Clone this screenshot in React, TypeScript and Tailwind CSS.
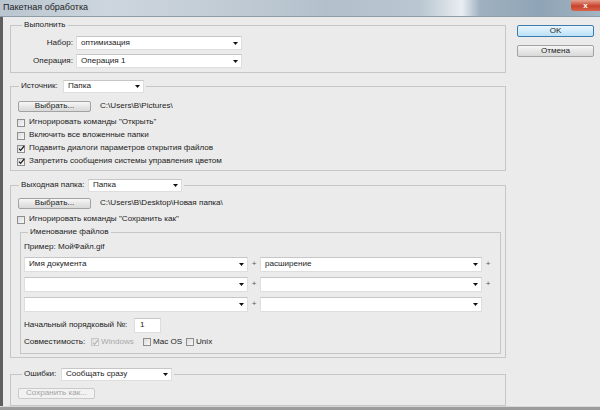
import React from "react";

function Arrow() {
  return (
    <svg width="5" height="3" viewBox="0 0 5 3" className="shrink-0">
      <path d="M0 0h5L2.5 3z" fill="#111" />
    </svg>
  );
}

function Select({ text, className }: { text?: string; className: string }) {
  return (
    <div
      className={`flex items-center bg-white border border-[#dedede] border-t-[#c6c6c6] pl-[4px] pr-[3px] ${className}`}
    >
      <span className="flex-1 truncate leading-none">{text}</span>
      <Arrow />
    </div>
  );
}

function Check({ checked, disabled }: { checked?: boolean; disabled?: boolean }) {
  return (
    <span
      className={`w-[8px] h-[8px] border ${
        disabled ? "border-[#c9c9c9]" : "border-[#8e8e8e]"
      } bg-[linear-gradient(135deg,#dcdcdc,#f8f8f8)] flex items-center justify-center shrink-0 overflow-visible`}
    >
      {checked && (
        <svg width="7" height="7" viewBox="0 0 7 7" className="shrink-0">
          <path
            d="M1 3.6l1.6 1.8L6.2 1"
            fill="none"
            stroke={disabled ? "#b4b4b4" : "#1f1f1f"}
            strokeWidth="1.2"
          />
        </svg>
      )}
    </span>
  );
}

function CheckRow({ label, checked }: { label: string; checked?: boolean }) {
  return (
    <div className="h-[13px] flex items-center gap-[4px] pl-[6px]">
      <Check checked={checked} />
      <span className="leading-none">{label}</span>
    </div>
  );
}

function Btn({
  children,
  className,
  disabled,
}: {
  children: React.ReactNode;
  className: string;
  disabled?: boolean;
}) {
  return (
    <div
      className={`flex items-center justify-center border rounded-[2px] leading-none ${
        disabled
          ? "border-[#cacaca] text-[#a3a3a3] bg-[#f2f2f2]"
          : "border-[#a2a2a2] bg-[linear-gradient(#f7f7f7,#e6e6e6_50%,#d9d9d9)]"
      } ${className}`}
    >
      {children}
    </div>
  );
}

function Plus({ hidden }: { hidden?: boolean }) {
  return (
    <span className="w-[12px] h-full flex items-center justify-center text-[#555] leading-none">
      {hidden ? "" : "+"}
    </span>
  );
}

function NameRow({ left, right, lastPlus = true }: { left?: string; right?: string; lastPlus?: boolean }) {
  return (
    <div className="flex items-center h-[15px]">
      <Select text={left} className="w-[224px] h-full" />
      <Plus />
      <Select text={right} className="w-[222px] h-full" />
      <Plus hidden={!lastPlus} />
    </div>
  );
}

export default function App() {
  return (
    <div className="w-[600px] h-[410px] overflow-hidden flex flex-col bg-[#ebebeb] text-[8.1px] text-[#1c1c1c] font-['Liberation_Sans',Arial,sans-serif]">
      {/* title bar */}
      <div className="h-[17px] shrink-0 flex items-center border-b border-[#8e9ca8] bg-[linear-gradient(90deg,#b9c5cf_0%,#cdd6de_18%,#c3cdd6_35%,#b3c0cb_55%,#bac6d0_70%,#e9eef2_77%,#9fb1c0_80%,#8fa4b6_90%,#a3b4c2_100%)]">
        <span className="pl-[3px] flex-1 text-[9px] text-[#1e1e1e]">Пакетная обработка</span>
        <div className="w-[29px] h-[11px] self-start rounded-bl-[3px] bg-[linear-gradient(#e5a28f,#c8432c_55%,#d7654b)] flex items-center justify-center text-white text-[8px] font-bold leading-none">
          x
        </div>
      </div>

      <div className="flex-1 flex border-l-[3px] border-[#5d5f61]">
        {/* left column */}
        <div className="w-[503px] pl-[7px] pt-[2px] flex flex-col">
          {/* Выполнить */}
          <fieldset className="border border-[#c6c6c6] pb-[4px]">
            <legend className="ml-[11px] px-[2px] h-[12px] leading-[12px]">Выполнить</legend>
            <div className="pt-[5px] flex flex-col gap-[4px]">
              <div className="flex items-center h-[14px]">
                <span className="w-[62px] text-right">Набор:</span>
                <Select text="оптимизация" className="ml-[3px] w-[166px] h-full" />
              </div>
              <div className="flex items-center h-[14px]">
                <span className="w-[62px] text-right">Операция:</span>
                <Select text="Операция 1" className="ml-[3px] w-[166px] h-full" />
              </div>
            </div>
          </fieldset>

          {/* Источник */}
          <fieldset className="mt-[7px] border border-[#c6c6c6] pb-[2px]">
            <legend className="ml-[8px] px-[2px] h-[13px] flex items-center">
              <span className="w-[42px]">Источник:</span>
              <Select text="Папка" className="w-[81px] h-full" />
            </legend>
            <div className="pt-[8px] flex items-center h-[19px] pl-[7px]">
              <Btn className="w-[73px] h-[11px]">Выбрать...</Btn>
              <span className="ml-[9px]">C:\Users\B\Pictures\</span>
            </div>
            <div className="pt-[4px] flex flex-col">
              <CheckRow label={"Игнорировать команды \"Открыть\""} />
              <CheckRow label="Включить все вложенные папки" />
              <CheckRow label="Подавить диалоги параметров открытия файлов" checked />
              <CheckRow label="Запретить сообщения системы управления цветом" checked />
            </div>
          </fieldset>

          {/* Выходная папка */}
          <fieldset className="mt-[8px] border border-[#c6c6c6] pb-[3px]">
            <legend className="ml-[8px] px-[2px] h-[13px] flex items-center">
              <span className="w-[67px]">Выходная папка:</span>
              <Select text="Папка" className="w-[94px] h-full" />
            </legend>
            <div className="pt-[6px] flex items-center h-[17px] pl-[7px]">
              <Btn className="w-[73px] h-[11px]">Выбрать...</Btn>
              <span className="ml-[9px]">C:\Users\B\Desktop\Новая папка\</span>
            </div>
            <div className="pt-[4px]">
              <CheckRow label={"Игнорировать команды \"Сохранить как\""} />
            </div>
            <fieldset className="ml-[9px] mr-[4px] border border-[#c6c6c6] pb-[5px]">
              <legend className="ml-[7px] px-[2px] h-[12px] leading-[12px]">Именование файлов</legend>
              <div className="pl-[3px] flex flex-col">
                <div className="mt-[3px] h-[12px] flex items-center">Пример: МойФайл.gif</div>
                <div className="mt-[4px] flex flex-col gap-[5px]">
                  <NameRow left="Имя документа" right="расширение" />
                  <NameRow />
                  <NameRow lastPlus={false} />
                </div>
                <div className="mt-[6px] h-[15px] flex items-center">
                  <span className="w-[110px]">Начальный порядковый №:</span>
                  <div className="w-[27px] h-full bg-white border border-[#dedede] border-t-[#c6c6c6] flex items-center pl-[5px] leading-none">
                    1
                  </div>
                </div>
                <div className="mt-[3px] h-[12px] flex items-center">
                  <span className="w-[67px]">Совместимость:</span>
                  <span className="w-[52px] flex items-center gap-[2px]">
                    <Check checked disabled />
                    <span className="text-[#a8a8a8]">Windows</span>
                  </span>
                  <span className="w-[43px] flex items-center gap-[2px]">
                    <Check />
                    <span>Mac OS</span>
                  </span>
                  <span className="flex items-center gap-[2px]">
                    <Check />
                    <span>Unix</span>
                  </span>
                </div>
              </div>
            </fieldset>
          </fieldset>

          {/* Ошибки */}
          <fieldset className="mt-[10px] border border-[#c6c6c6] pb-[6px]">
            <legend className="ml-[11px] px-[2px] h-[13px] flex items-center">
              <span className="w-[37px]">Ошибки:</span>
              <Select text="Сообщать сразу" className="w-[111px] h-full" />
            </legend>
            <div className="pt-[7px] pl-[7px]">
              <Btn disabled className="w-[77px] h-[11px]">
                Сохранить как...
              </Btn>
            </div>
          </fieldset>
        </div>

        {/* right column */}
        <div className="pl-[11px] pt-[8px] flex flex-col gap-[8px]">
          <div className="w-[77px] h-[12px] flex items-center justify-center rounded-[2px] border border-[#3d7bad] bg-[linear-gradient(#e9f5fc,#d2ecfb_50%,#b9e0f7)] leading-none">
            OK
          </div>
          <Btn className="w-[77px] h-[12px]">Отмена</Btn>
        </div>
      </div>
      <div className="h-[4px] shrink-0 bg-[#9a9c9e] border-t border-[#d8d8d8]" />
    </div>
  );
}
